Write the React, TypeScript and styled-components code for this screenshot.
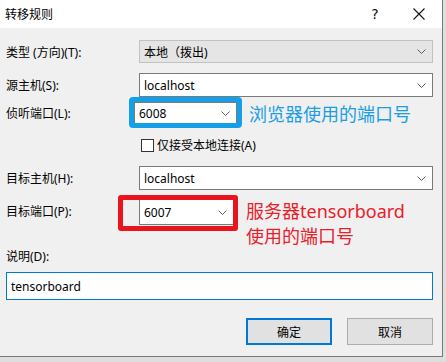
import React from 'react';
import styled, { createGlobalStyle } from 'styled-components';

const GlobalStyle = createGlobalStyle`
  html, body {
    margin: 0;
    padding: 0;
    background: #dedede;
  }
  body {
    font-family: "Noto Sans", "Noto Sans CJK SC", sans-serif;
    font-size: 12px;
    color: #000000;
  }
`;

const Chevron = () => (
  <svg width="9" height="5" viewBox="0 0 9 5">
    <polyline points="0.5,0.5 4.5,4.5 8.5,0.5" fill="none" stroke="#5a5a5a" strokeWidth="1" />
  </svg>
);

const Combo = ({ value, width, disabled }: { value: string; width?: number; disabled?: boolean }) => (
  <ComboBox $width={width} $disabled={disabled}>
    <span>{value}</span>
    <Chevron />
  </ComboBox>
);

const App = () => {
  return (
    <>
      <GlobalStyle />
      <Dialog>
        <TitleBar>
          <Title>转移规则</Title>
          <TitleButton>?</TitleButton>
          <TitleButton>
            <svg width="12" height="12" viewBox="0 0 12 12">
              <path d="M0.5 0.5 L11.5 11.5 M11.5 0.5 L0.5 11.5" stroke="#111" strokeWidth="1.1" />
            </svg>
          </TitleButton>
        </TitleBar>
        <Body>
          <Row $top={12} $height={23}>
            <Label>类型 (方向)(T):</Label>
            <Combo value="本地（拨出)" disabled />
          </Row>
          <Row $top={10} $height={24}>
            <Label>源主机(S):</Label>
            <Combo value="localhost" />
          </Row>
          <Row $top={5} $height={22}>
            <Label $width={128}>侦听端口(L):</Label>
            <Marked>
              <Combo value="6008" width={103} />
              <BlueBox />
            </Marked>
            <Note $color="#1a9ee6">浏览器使用的端口号</Note>
          </Row>
          <Row $top={13} $height={16}>
            <Label $width={134} />
            <CheckBox />
            <CheckText>仅接受本地连接(A)</CheckText>
          </Row>
          <Row $top={13} $height={24}>
            <Label>目标主机(H):</Label>
            <Combo value="localhost" />
          </Row>
          <Row $top={9} $height={26} $alignTop>
            <Label $lineHeight={26}>目标端口(P):</Label>
            <Marked>
              <Combo value="6007" width={95} />
              <RedBox />
            </Marked>
            <Note $color="#e8202a" $lineHeight={25}>
              服务器tensorboard
              <br />
              使用的端口号
            </Note>
          </Row>
          <Row $top={23} $height={16}>
            <Label>说明(D):</Label>
          </Row>
          <TextBox>tensorboard</TextBox>
          <ButtonRow>
            <Button $primary>确定</Button>
            <Button>取消</Button>
          </ButtonRow>
        </Body>
      </Dialog>
    </>
  );
};

export default App;

const Dialog = styled.div`
  width: 442px;
  height: 356px;
  background: #f0f0f0;
  border-right: 1px solid #7a7a7a;
  border-bottom: 1px solid #7a7a7a;
  display: flex;
  flex-direction: column;
`;

const TitleBar = styled.div`
  height: 28px;
  background: #ffffff;
  display: flex;
  align-items: center;
  padding-left: 5px;
  padding-right: 1px;
`;

const Title = styled.div`
  flex: 1;
  font-size: 12px;
`;

const TitleButton = styled.div`
  width: 44px;
  height: 28px;
  display: flex;
  align-items: center;
  justify-content: center;
  font-size: 14px;
  font-family: "DejaVu Sans", sans-serif;
  color: #111;
`;

const Body = styled.div`
  display: flex;
  flex-direction: column;
  padding: 0 9px 0 6px;
`;

const Row = styled.div<{ $top: number; $height: number; $alignTop?: boolean }>`
  display: flex;
  align-items: ${({ $alignTop }) => ($alignTop ? 'flex-start' : 'center')};
  margin-top: ${({ $top }) => $top}px;
  height: ${({ $height }) => $height}px;
`;

const Label = styled.div<{ $width?: number; $lineHeight?: number }>`
  width: ${({ $width }) => $width ?? 133}px;
  flex-shrink: 0;
  font-size: 12px;
  white-space: nowrap;
  line-height: ${({ $lineHeight }) => ($lineHeight ? `${$lineHeight}px` : 'normal')};
`;

const ComboBox = styled.div<{ $width?: number; $disabled?: boolean }>`
  box-sizing: border-box;
  ${({ $width }) => ($width ? `width: ${$width}px;` : 'flex: 1;')}
  height: 100%;
  display: flex;
  align-items: center;
  justify-content: space-between;
  padding: 0 6px 0 4px;
  background: ${({ $disabled }) => ($disabled ? '#e5e5e5' : '#ffffff')};
  border: 1px solid ${({ $disabled }) => ($disabled ? '#c2c2c2' : '#7a7a7a')};
  font-size: 12px;
`;

const Marked = styled.div`
  position: relative;
  display: flex;
  height: 100%;
`;

const BlueBox = styled.div`
  position: absolute;
  left: -5px;
  right: -5px;
  top: -5px;
  bottom: -4px;
  border: 5px solid #149fe6;
  border-radius: 4px;
  box-sizing: border-box;
  pointer-events: none;
`;

const RedBox = styled.div`
  position: absolute;
  left: -21px;
  right: -4px;
  top: -4px;
  bottom: -6px;
  border: 5px solid #e8141e;
  border-radius: 3px;
  box-sizing: border-box;
  pointer-events: none;
`;

const Note = styled.div<{ $color: string; $lineHeight?: number }>`
  margin-left: 12px;
  color: ${({ $color }) => $color};
  font-size: 18px;
  white-space: nowrap;
  line-height: ${({ $lineHeight }) => ($lineHeight ? `${$lineHeight}px` : 'normal')};
`;

const CheckBox = styled.div`
  width: 13px;
  height: 13px;
  box-sizing: border-box;
  border: 1px solid #333333;
  background: #ffffff;
  margin-left: 1px;
`;

const CheckText = styled.div`
  margin-left: 3px;
  font-size: 12px;
`;

const TextBox = styled.div`
  margin-top: 8px;
  height: 28px;
  box-sizing: border-box;
  border: 1px solid #0078d7;
  background: #ffffff;
  display: flex;
  align-items: center;
  padding-left: 4px;
  font-size: 12px;
`;

const ButtonRow = styled.div`
  display: flex;
  justify-content: flex-end;
  gap: 15px;
  margin-top: 18px;
`;

const Button = styled.div<{ $primary?: boolean }>`
  width: 86px;
  height: 27px;
  box-sizing: border-box;
  display: flex;
  align-items: center;
  justify-content: center;
  background: #e1e1e1;
  border: ${({ $primary }) => ($primary ? '2px solid #0078d7' : '1px solid #adadad')};
  font-size: 12px;
`;
